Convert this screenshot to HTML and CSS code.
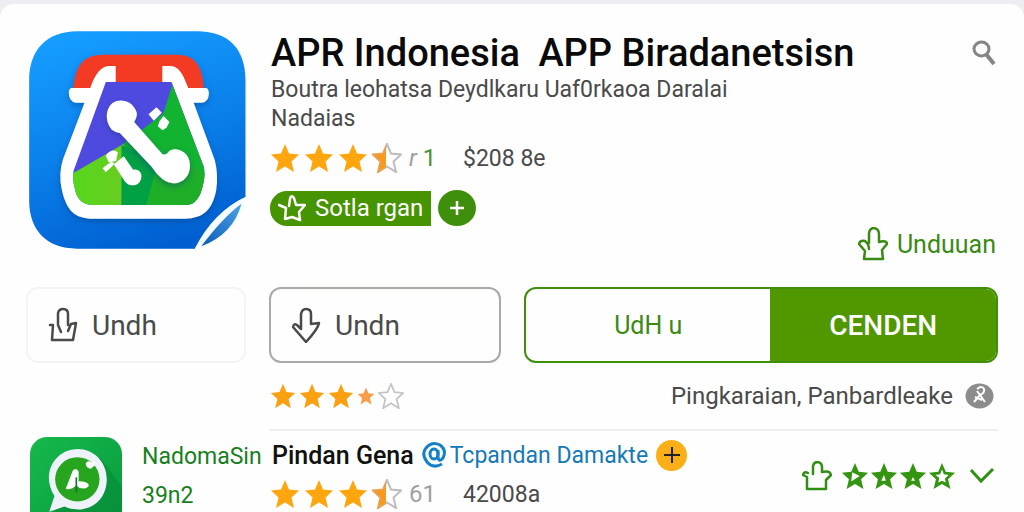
FILE: index.html
```html
<!DOCTYPE html>
<html lang="id">
<head>
    <meta charset="UTF-8">
    <meta name="viewport" content="width=device-width, initial-scale=1.0">
    <title>APR Indonesia</title>
    <link rel="stylesheet" href="styles.css">
</head>
<body>
    <!-- Shared shapes -->
    <svg class="defs" aria-hidden="true">
        <defs>
            <linearGradient id="halfFill">
                <stop offset="0.45" stop-color="#f79a1c"/>
                <stop offset="0.45" stop-color="#fff"/>
            </linearGradient>
            <linearGradient id="halfLine">
                <stop offset="0.45" stop-color="#e9a050"/>
                <stop offset="0.45" stop-color="#bdbdbd"/>
            </linearGradient>
            <path id="star" d="M15 1 L19 10.500 L29 11.500 L21.500 18.500 L24 29 L15 23.500 L6 29 L8.500 18.500 L1 11.500 L11 10.500 Z"/>
        </defs>
    </svg>

    <main class="card">
        <section class="app">
            <div class="app-side">
                <svg class="app-icon" viewBox="88 92 650 654" role="img" aria-label="App icon">
                    <defs>
                        <linearGradient id="sky" x1="0.3" y1="0" x2="0.6" y2="1">
                            <stop offset="0" stop-color="#159cff"/>
                            <stop offset="0.5" stop-color="#0a80ea"/>
                            <stop offset="1" stop-color="#005fd0"/>
                        </linearGradient>
                        <linearGradient id="fold" x1="0" y1="1" x2="1" y2="0">
                            <stop offset="0" stop-color="#0a5cb8"/>
                            <stop offset="1" stop-color="#4da0e6"/>
                        </linearGradient>
                        <linearGradient id="lime">
                            <stop offset="0" stop-color="#55d81c"/>
                            <stop offset="1" stop-color="#68cc20"/>
                        </linearGradient>
                        <filter id="shade" x="-20%" y="-20%" width="140%" height="140%">
                            <feDropShadow dx="0" dy="8" stdDeviation="9" flood-color="#003a80" flood-opacity="0.45"/>
                        </filter>
                        <clipPath id="bag">
                            <path d="M318 245 H515 L612 500 Q617 525 610 550 Q598 612 560 614 H275 Q236 612 226 570 Q217 540 221 512 Z"/>
                        </clipPath>
                    </defs>
                    <path fill="url(#sky)" d="M232 93 H592 C690 93 737 150 737 240 V590 Q650 630 585 745 H232 C140 745 88 690 88 600 V240 C88 150 140 93 232 93 Z"/>
                    <path fill="#f4fcff" d="M737 590 Q640 635 585 745 Q610 748 650 715 Q732 665 737 590 Z"/>
                    <path fill="url(#fold)" d="M725 610 Q670 650 604 738 Q700 702 725 610 Z"/>
                    <g filter="url(#shade)">
                        <path fill="#f23a20" d="M220 268 C226 195 250 163 310 163 H530 C588 163 608 200 612 268 Z"/>
                        <path fill="#fff" d="M215 263 H290 V307 H228 Q206 304 207 276 Q207 265 215 263 Z M545 263 H620 Q628 268 627 282 Q625 306 606 307 H545 Z"/>
                        <path fill="#fff" d="M348 197 H330 C304 197 288 220 276 250 L190 475 Q175 520 186 568 C200 630 225 655 280 655 H555 C610 655 638 628 649 570 Q656 525 645 480 L562 255 C548 218 535 197 510 197 H487 V250 H348 Z"/>
                        <path fill="#f23a20" d="M348 190 H487 V246 H348 Z"/>
                    </g>
                    <g clip-path="url(#bag)">
                        <rect x="210" y="240" width="410" height="380" fill="#4f4adf"/>
                        <path fill="#12b330" d="M522 240 L490 340 L370 430 V620 H630 V240 Z"/>
                        <path fill="url(#lime)" d="M210 524 L372 430 L365 620 H210 Z"/>
                        <path fill="#02a045" d="M365 435 L480 480 L440 620 H365 Z"/>
                        <path fill="#1fae28" d="M470 500 L560 490 L620 520 V620 H438 Z"/>
                    </g>
                    <g filter="url(#shade)" fill="#fff">
                        <path d="M336 388 C315 365 316 325 338 308 C362 292 397 302 408 330 Q416 344 403 365 L488 462 Q500 465 508 452 C530 438 568 455 570 490 C574 528 545 553 515 548 C490 545 470 520 456 500 L360 398 Q345 395 336 388 Z"/>
                    </g>
                    <g fill="#fff">
                        <path d="M446 342 L470 321 L486 337 L462 361 Z M478 364 L491 347 L509 365 L500 382 L488 390 L474 378 Z"/>
                        <path d="M318 466 Q336 442 354 456 L349 482 L326 485 Z M308 504 L336 482 L344 491 L318 516 Z M342 492 L372 468 L400 508 C425 505 432 530 418 547 C402 562 380 555 370 535 Z"/>
                    </g>
                </svg>
            </div>

            <div class="app-info">
                <div class="title-row">
                    <h1>APR Indonesia <span class="title-end">APP Biradanetsisn</span></h1>
                    <button class="icon-button" type="button" aria-label="Search">
                        <svg width="26" height="26" viewBox="0 0 26 26" fill="none" stroke="#858585">
                            <ellipse cx="9.500" cy="9" rx="7.500" ry="7" stroke-width="3"/>
                            <path d="M14 14 L22 24" stroke-width="4"/>
                        </svg>
                    </button>
                </div>
                <p class="subtitle">Boutra leohatsa Deydlkaru Uaf0rkaoa Daralai<br>Nadaias</p>
                <div class="rating">
                    <span class="stars">
                        <svg class="star" viewBox="0 0 30 30"><use href="#star"/></svg>
                        <svg class="star" viewBox="0 0 30 30"><use href="#star"/></svg>
                        <svg class="star" viewBox="0 0 30 30"><use href="#star"/></svg>
                        <svg class="star star-half" viewBox="0 0 30 30"><use href="#star"/></svg>
                    </span>
                    <span class="score"><i>r</i> <b>1</b></span>
                    <span class="size">$208 8e</span>
                </div>
                <div class="tags">
                    <button class="tag" type="button">
                        <svg width="28" height="28" viewBox="0 0 28 28" fill="none" stroke="#fff" stroke-width="2.500" stroke-linejoin="round" stroke-linecap="round">
                            <path d="M1 11 L8 14 L7 25 L14 23 L22 26 L21 18 L27 11 L18 11 L16 4 Q13 0 12 5 L11 12"/>
                        </svg>
                        Sotla rgan
                    </button>
                    <button class="round-button" type="button" aria-label="Add">
                        <svg width="16" height="16" viewBox="0 0 16 16" stroke="#fff" stroke-width="2.500"><path d="M8 1 V15 M1 8 H15"/></svg>
                    </button>
                </div>
                <a class="more-link" href="#">
                    <svg width="30" height="34" viewBox="0 0 30 34" fill="none" stroke="#3b8a14" stroke-width="2.500" stroke-linejoin="round" stroke-linecap="round">
                        <path d="M11 16 V6 Q12 1 16 1 Q21 2 21 7 V15 Q29 13 29 17 L24 23 L25 32 H6 L7 24 L1 17 Q2 13 7 14 Q11 17 11 22"/>
                    </svg>
                    Unduuan
                </a>
            </div>
        </section>

        <section class="actions">
            <button class="box-button faint" type="button">
                <svg width="30" height="36" viewBox="0 0 30 36" fill="none" stroke="#4a4a4a" stroke-width="2.500" stroke-linejoin="round" stroke-linecap="round">
                    <path d="M2 18 H5 L4 33 H25 L28 16 L23 17 L20 24 M13 25 L10 18 V6 Q11 2 15 2 Q20 2 20 7 V18"/>
                </svg>
                Undh
            </button>
            <button class="box-button" type="button">
                <svg width="30" height="36" viewBox="0 0 30 36" fill="none" stroke="#4a4a4a" stroke-width="2.500" stroke-linejoin="round" stroke-linecap="round">
                    <path d="M10 22 V7 Q11 2 15 2 Q20 2 20 7 V17 L28 16 Q27 22 15 35 L2 20 Q3 15 7 19 L10 22"/>
                </svg>
                Undn
            </button>
            <div class="split">
                <button class="split-left" type="button">UdH u</button>
                <button class="split-right" type="button">CENDEN</button>
            </div>
        </section>

        <section class="summary">
            <span class="stars stars-small">
                <svg class="star" viewBox="0 0 30 30"><use href="#star"/></svg>
                <svg class="star" viewBox="0 0 30 30"><use href="#star"/></svg>
                <svg class="star" viewBox="0 0 30 30"><use href="#star"/></svg>
                <svg class="star star-tiny" viewBox="0 0 30 30"><use href="#star"/></svg>
                <svg class="star star-empty" viewBox="0 0 30 30"><use href="#star"/></svg>
            </span>
            <span class="category">Pingkaraian, Panbardleake</span>
            <button class="icon-button" type="button" aria-label="Details">
                <svg width="29" height="26" viewBox="0 0 29 26">
                    <ellipse cx="14.500" cy="13" rx="14" ry="12.500" fill="#8c8c8c"/>
                    <path d="M12 6 Q17 2 19 6 Q20 10 15 12 L9 19 M12 8 L15 12 L20 19 M10 14 L17 17" fill="none" stroke="#fff" stroke-width="2"/>
                </svg>
            </button>
        </section>

        <section class="item">
            <svg class="item-icon" viewBox="88 38 278 278" role="img" aria-label="NadomaSin">
                <defs>
                    <linearGradient id="leaf" x1="0" y1="0" x2="1" y2="1">
                        <stop offset="0" stop-color="#16b84c"/>
                        <stop offset="1" stop-color="#079a3c"/>
                    </linearGradient>
                </defs>
                <rect x="88" y="38" width="278" height="278" rx="52" fill="url(#leaf)"/>
                <path fill="#078a38" opacity="0.6" d="M300 100 L366 190 V264 Q366 316 314 316 H200 L160 262 Z"/>
                <path fill="#eef2fa" d="M232 74 C280 74 320 112 320 166 C320 220 282 257 235 257 Q210 257 192 248 L146 264 L162 216 C136 176 142 132 165 105 Q192 74 232 74 Z"/>
                <circle cx="231" cy="166" r="67" fill="#27a51f"/>
                <path fill="#fff" d="M196 194 L217 140 Q226 128 235 142 V172 Q262 172 266 184 Q262 197 238 192 L228 184 Q212 200 196 194 Z M256 118 Q264 106 274 115 Q286 110 286 122 L272 134 Q258 132 256 118 Z"/>
                <path stroke="#186f3c" stroke-width="5" d="M228 160 V205"/>
            </svg>
            <div class="item-name">
                <a href="#">NadomaSin</a>
                <span>39n2</span>
            </div>
            <div class="item-info">
                <div class="item-title">
                    <h2>Pindan Gena</h2>
                    <a href="#">
                        <svg width="24" height="26" viewBox="0 0 24 26" fill="none" stroke="#1580c8" stroke-width="3">
                            <path d="M20 22 Q11 27 5 20 Q-1 12 4 6 Q10 -1 18 3 Q25 8 21 16 Q17 21 16 15 V8"/>
                            <ellipse cx="12" cy="12" rx="4" ry="5"/>
                        </svg>
                        Tcpandan Damakte
                    </a>
                    <button class="round-button gold" type="button" aria-label="Add">
                        <svg width="16" height="16" viewBox="0 0 16 16" stroke="#222" stroke-width="2"><path d="M8 0 V16 M0 8 H16"/></svg>
                    </button>
                </div>
                <div class="rating">
                    <span class="stars">
                        <svg class="star" viewBox="0 0 30 30"><use href="#star"/></svg>
                        <svg class="star" viewBox="0 0 30 30"><use href="#star"/></svg>
                        <svg class="star" viewBox="0 0 30 30"><use href="#star"/></svg>
                        <svg class="star star-half" viewBox="0 0 30 30"><use href="#star"/></svg>
                    </span>
                    <span class="score">61</span>
                    <span class="size">42008a</span>
                </div>
            </div>
            <div class="item-actions">
                <svg width="30" height="30" viewBox="0 0 30 30" fill="none" stroke="#2f8f12" stroke-width="2.500" stroke-linejoin="round" stroke-linecap="round">
                    <path d="M11 13 V5 Q12 1 16 1 Q20 2 20 6 V11 Q28 9 29 14 L24 19 V28 H5 V16 L1 14 Q2 10 6 12"/>
                </svg>
                <span class="stars stars-green">
                    <svg class="star" viewBox="0 0 30 30"><use href="#star"/><path d="M12 11 L20 15 L11 21 Z"/></svg>
                    <svg class="star" viewBox="0 0 30 30"><use href="#star"/><path d="M15 14 L17 20 H12 Z"/></svg>
                    <svg class="star" viewBox="0 0 30 30"><use href="#star"/><path d="M15 16 L17 20 H13 Z"/></svg>
                    <svg class="star" viewBox="0 0 30 30"><use href="#star"/><path d="M15 8 L17 13 L22 14 L18 18 L19 22 L15 20 L11 22 L12 17 L8 14 L13 13 Z"/></svg>
                </span>
                <button class="icon-button" type="button" aria-label="Expand">
                    <svg width="26" height="18" viewBox="0 0 26 18" fill="none" stroke="#2f8f12" stroke-width="3"><path d="M2 3 L12 14 L24 2"/></svg>
                </button>
            </div>
        </section>
    </main>
</body>
</html>
```

FILE: styles.css
```css
* {
    margin: 0;
    padding: 0;
    box-sizing: border-box;
}

body {
    font-family: Roboto, "Liberation Sans", sans-serif;
    font-size: 24px;
    color: #4a4a4a;
    background: #ededf3;
    padding-top: 4px;
    overflow-x: hidden;
}

svg {
    display: block;
    flex: none;
}

button {
    font: inherit;
    color: inherit;
    background: none;
    border: none;
    cursor: pointer;
}

a {
    color: inherit;
    text-decoration: none;
}

.defs {
    position: absolute;
    width: 0;
    height: 0;
}

.card {
    background: #fefefe;
    border-radius: 14px 14px 0 0;
    padding: 27px 26px 0;
}

/* App header */
.app {
    display: flex;
    gap: 24px;
}

.app-side {
    flex: 0 0 220px;
}

.app-icon {
    width: 217px;
    height: 218px;
    margin-left: 3px;
}

.app-info {
    flex: 1;
    display: flex;
    flex-direction: column;
}

.title-row {
    display: flex;
    justify-content: space-between;
    align-items: center;
    height: 44px;
}

h1 {
    font-size: 38px;
    font-weight: 500;
    line-height: 40px;
    color: #0a0a0a;
    white-space: nowrap;
    padding-left: 1px;
}

.title-end {
    margin-left: 9px;
}

.subtitle {
    font-size: 23px;
    line-height: 29px;
    padding-left: 1px;
}

.rating {
    display: flex;
    align-items: center;
    height: 50px;
}

.stars {
    display: flex;
    align-items: center;
    gap: 4px;
    fill: #ffa60f;
}

.star {
    width: 30px;
    height: 30px;
}

.star-half {
    fill: url(#halfFill);
    stroke: url(#halfLine);
    stroke-width: 2;
}

.score {
    width: 36px;
    margin-left: 7px;
    color: #a0a0a0;
}

.score b {
    font-weight: 400;
    color: #4e8f3a;
}

.size {
    margin-left: 18px;
    font-size: 23px;
}

.tags {
    display: flex;
    align-items: center;
    gap: 7px;
    height: 36px;
    margin-top: 7px;
}

.tag {
    display: flex;
    align-items: center;
    gap: 9px;
    height: 35px;
    padding: 0 8px;
    color: #fff;
    background: #459400;
    border-radius: 17px 0 0 17px;
}

.round-button {
    display: flex;
    align-items: center;
    justify-content: center;
    width: 38px;
    height: 36px;
    background: #3f8f0c;
    border-radius: 50%;
}

.round-button.gold {
    width: 31px;
    height: 31px;
    background: #fbaf17;
}

.more-link {
    display: flex;
    align-items: center;
    align-self: flex-end;
    gap: 9px;
    height: 36px;
    padding-right: 2px;
    font-size: 25px;
    color: #3b8a14;
}

/* Buttons */
.actions {
    display: grid;
    grid-template-columns: 220px 232px 1fr;
    gap: 22px 23px;
    margin-top: 25px;
}

.box-button {
    display: flex;
    align-items: center;
    gap: 14px;
    height: 76px;
    padding: 0 20px;
    font-size: 28px;
    border: 2px solid #a9aaa5;
    border-radius: 12px;
}

.box-button.faint {
    border-color: #f4f4f4;
}

.split {
    display: flex;
    height: 76px;
    border: 2px solid #3f8f0c;
    border-radius: 12px;
    overflow: hidden;
}

.split-left {
    flex: 13;
    font-size: 25px;
    color: #3b8a14;
}

.split-right {
    flex: 12;
    font-size: 28px;
    font-weight: 500;
    color: #fff;
    background: #509700;
}

/* Rating summary */
.summary {
    display: flex;
    align-items: center;
    height: 68px;
    margin-left: 244px;
    border-bottom: 2px solid #ededed;
}

.stars-small {
    gap: 3px;
    fill: #fba010;
}

.stars-small .star {
    width: 26px;
    height: 26px;
}

.stars-small .star-tiny {
    width: 18px;
    height: 18px;
    fill: #fa9c48;
}

.star-empty {
    fill: #fff;
    stroke: #c4c4c4;
    stroke-width: 2;
}

.category {
    margin-left: auto;
    margin-right: 12px;
}

.summary .icon-button {
    margin-right: 4px;
}

.icon-button {
    flex: none;
}

/* List item */
.item {
    display: flex;
    padding: 6px 3px 0 4px;
}

.item-icon {
    width: 92px;
    height: 92px;
}

.item-name {
    display: flex;
    flex-direction: column;
    width: 120px;
    margin-left: 20px;
    font-size: 23px;
    line-height: 39px;
    color: #17801c;
}

.item-info {
    margin-left: 8px;
}

.item-title {
    display: flex;
    align-items: center;
    gap: 8px;
    height: 36px;
    padding-left: 2px;
    white-space: nowrap;
}

h2 {
    font-size: 25px;
    font-weight: 500;
    color: #111;
}

.item-title a {
    display: flex;
    align-items: center;
    gap: 4px;
    font-size: 23px;
    color: #1579b8;
}

.item-info .rating {
    height: 42px;
}

.item-actions {
    display: flex;
    align-items: center;
    gap: 9px;
    height: 78px;
    margin-left: auto;
}

.item-actions .icon-button {
    margin-left: 4px;
}

.stars-green {
    gap: 1px;
    fill: #349512;
}

.stars-green .star {
    width: 28px;
    height: 28px;
}

.stars-green path {
    fill: #fff;
}
```
